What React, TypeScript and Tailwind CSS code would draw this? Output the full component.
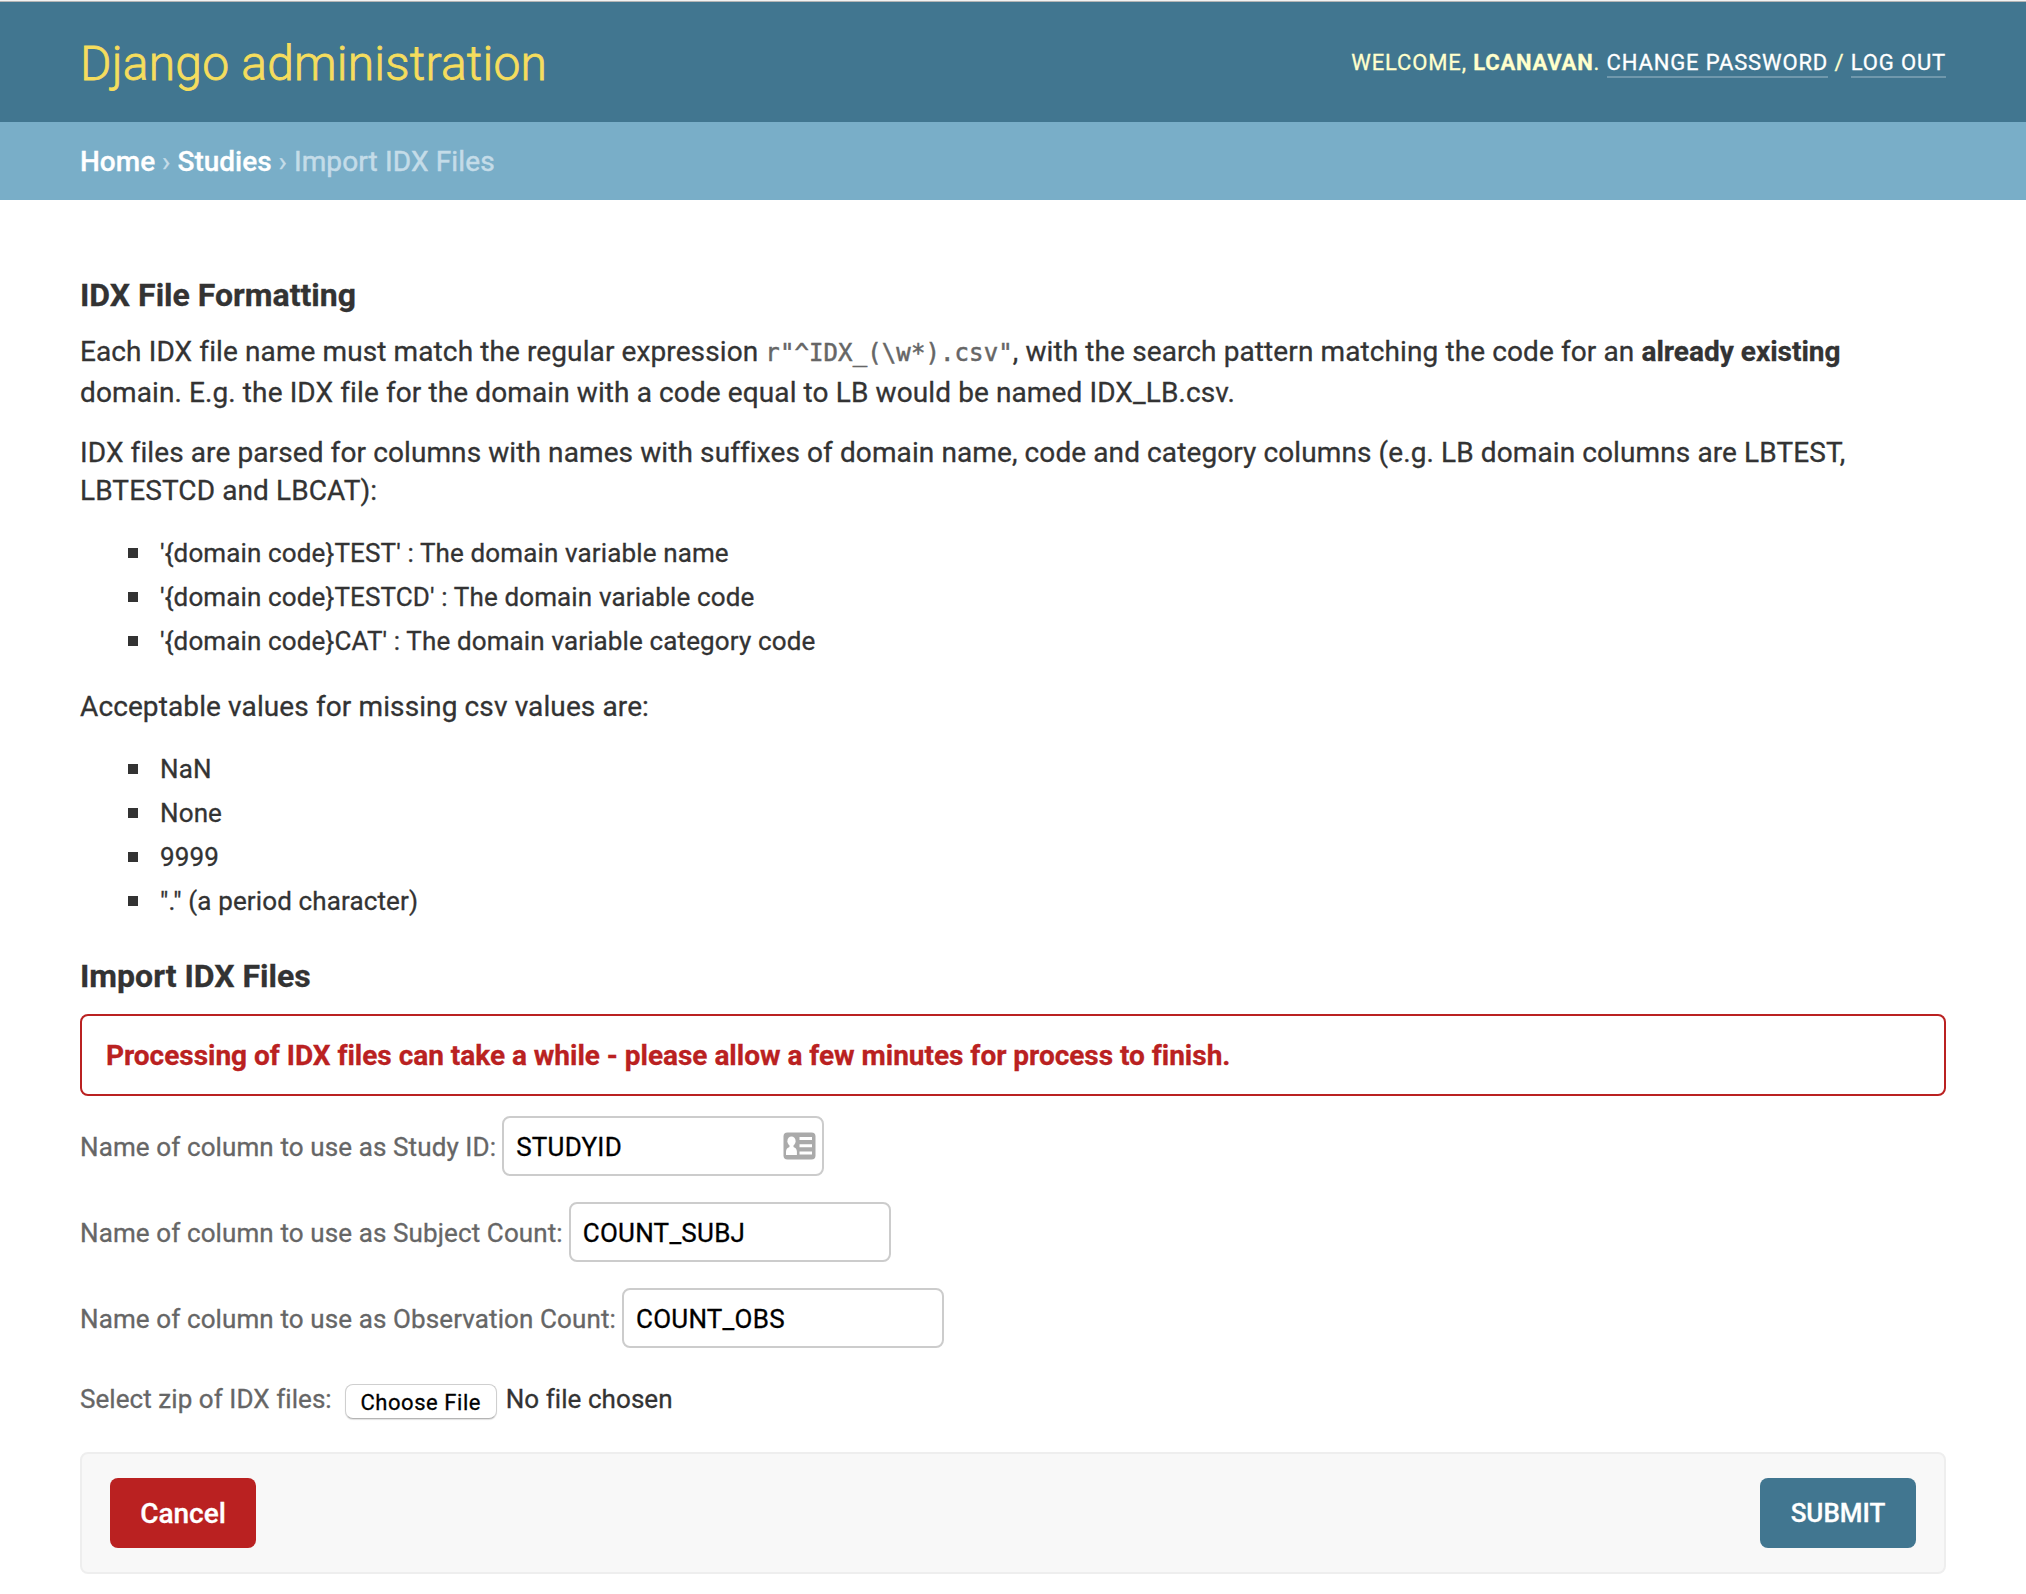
import React from "react";

function Field({ label, value, icon }: { label: string; value: string; icon?: boolean }) {
  return (
    <div className="mb-[26px] flex h-[60px] items-center">
      <label className="mr-[6px] pt-[2px] text-[26px] tracking-[0.11px] whitespace-nowrap text-[#666]">{label}</label>
      <div className="relative h-[60px] w-[322px]">
        <input
          defaultValue={value}
          className="h-full w-full rounded-[8px] border-2 border-[#ccc] bg-white px-3 pt-px text-[26px] tracking-[0.25px] text-black outline-none"
        />
        {icon && (
          <svg className="absolute top-[16px] left-[281px]" width="33" height="28" viewBox="0 0 33 28">
            <rect x="0.5" y="0.5" width="32" height="27" rx="4" fill="#aaa" />
            <ellipse cx="8.5" cy="9.2" rx="4.1" ry="4.8" fill="#fff" />
            <path d="M6.5 12h4v3c2 .6 3.4 2.2 3.4 4.5V23H3v-3.5c0-2.300 1.500-3.900 3.500-4.500z" fill="#fff" />
            <path d="M16.500 5H29v3H16.500zM16.500 12.200H29v3H16.500zM16.500 19.600H29v3H16.500z" fill="#fff" />
          </svg>
        )}
      </div>
    </div>
  );
}

function Bullets({ items }: { items: string[] }) {
  return (
    <ul className="text-[26px] leading-[44px] tracking-[0.13px]">
      {items.map((t) => (
        <li key={t} className="flex items-center">
          <span className="mr-[22px] ml-12 h-[10px] w-[10px] bg-[#333]" />
          {t}
        </li>
      ))}
    </ul>
  );
}

export default function App() {
  return (
    <div className="h-[1594px] w-[2026px] overflow-hidden bg-white font-['Roboto',sans-serif] text-[#333] [-webkit-text-stroke:0.3px]">
      <div className="h-[2px] border-b border-[#b5b5b5] bg-[#f2f2f2]" />
      <header className="flex h-[120px] items-center justify-between bg-[#417690] px-20">
        <h1 className="pt-[3px] text-[48px] leading-[56px] font-light tracking-[0.2px] text-[#f5dd5d] [-webkit-text-stroke:0.8px]">
          Django administration
        </h1>
        <div className="pt-px text-[22px] leading-[28px] tracking-[0.86px] whitespace-nowrap text-[#ffc] uppercase">
          Welcome, <strong className="font-bold tracking-[0.8px]">lcanavan</strong>.{" "}
          <a className="border-b-2 border-white/25 pb-px text-white">Change password</a> /{" "}
          <a className="border-b-2 border-white/25 pb-px text-white">Log out</a>
        </div>
      </header>
      <nav className="flex h-[78px] items-center bg-[#79aec8] px-20 pt-[2px] text-[28px] whitespace-pre text-[#c4dce8]">
        <a className="font-medium text-white">Home</a> › <a className="font-medium text-white">Studies</a> ›{" "}
        <span className="tracking-[0.13px] [-webkit-text-stroke:0.5px]">Import IDX Files</span>
      </nav>
      <main className="px-20 pt-[74px]">
        <h2 className="text-[32px] leading-[42px] font-bold">IDX File Formatting</h2>
        <p className="mt-[16px] text-[28px] leading-[39px] tracking-[0.105px]">
          Each IDX file name must match the regular expression{" "}
          <code className="font-['DejaVu_Sans_Mono',monospace] text-[24px] text-[#666] [-webkit-text-stroke:0.5px]">
            {'r"^IDX_(\\w*).csv"'}
          </code>
          , with the search pattern matching the code for an <strong className="font-bold tracking-normal">already existing</strong>
          <br />
          domain. E.g. the IDX file for the domain with a code equal to LB would be named IDX_LB.csv.
        </p>
        <p className="mt-[22px] mb-[-1px] text-[28px] leading-[38px] tracking-[0.1px]">
          IDX files are parsed for columns with names with suffixes of domain name, code and category columns (e.g. LB domain columns are LBTEST,
          <br />
          LBTESTCD and LBCAT):
        </p>
        <div className="mt-[22px]">
          <Bullets
            items={[
              "'{domain code}TEST' : The domain variable name",
              "'{domain code}TESTCD' : The domain variable code",
              "'{domain code}CAT' : The domain variable category code",
            ]}
          />
        </div>
        <p className="mt-[24px] text-[28px] leading-[39px] tracking-[0.11px]">Acceptable values for missing csv values are:</p>
        <div className="mt-[21px]">
          <Bullets items={["NaN", "None", "9999", '"." (a period character)']} />
        </div>
        <h2 className="mt-[32px] text-[32px] leading-[42px] font-bold">Import IDX Files</h2>
        <p className="mt-[17px] mb-[20px] flex h-[82px] items-center rounded-[8px] border-2 border-[#ba2121] px-6 pt-[2px] text-[28px] font-bold tracking-[-0.02px] text-[#ba2121]">
          Processing of IDX files can take a while - please allow a few minutes for process to finish.
        </p>
        <Field label="Name of column to use as Study ID:" value="STUDYID" icon />
        <Field label="Name of column to use as Subject Count:" value="COUNT_SUBJ" />
        <Field label="Name of column to use as Observation Count:" value="COUNT_OBS" />
        <div className="flex h-[50px] items-center text-[26px]">
          <label className="tracking-[0.06px] text-[#666]">Select zip of IDX files:</label>
          <button className="mt-[5px] ml-[13px] h-[35px] w-[152px] rounded-[8px] border border-[#cfcfcf] border-b-[#b4b4b4] bg-white pt-[2px] text-[22px] leading-none tracking-[0.55px] text-black shadow-[0_1px_1px_rgba(0,0,0,0.12)]">
            Choose File
          </button>
          <span className="ml-[9px] tracking-[0.06px]">No file chosen</span>
        </div>
        <div className="mt-[28px] flex h-[122px] items-center justify-between rounded-[8px] border-2 border-[#eee] bg-[#f8f8f8] px-7">
          <button className="h-[70px] w-[146px] rounded-[8px] bg-[#ba2121] pt-[2px] text-[28px] font-medium text-white">Cancel</button>
          <button className="h-[70px] w-[156px] rounded-[8px] bg-[#417690] text-[26px] font-medium text-white">SUBMIT</button>
        </div>
      </main>
    </div>
  );
}
